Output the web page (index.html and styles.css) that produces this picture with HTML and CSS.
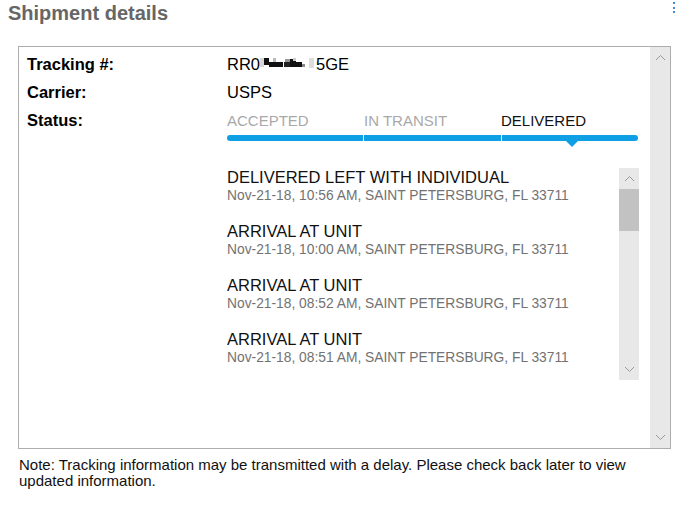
FILE: index.html
```html
<!DOCTYPE html>
<html>
<head>
<meta charset="utf-8">
<link rel="stylesheet" href="styles.css">
</head>
<body>
<div class="header">
  <h1 class="title">Shipment details</h1>
  <span class="edge-mark"></span>
</div>
<div class="panel">
  <div class="panel-content">
    <div class="row">
      <div class="label">Tracking #:</div>
      <div class="value">RR0<svg class="redact" width="56" height="16" viewBox="0 0 56 16"><rect x="0" y="3" width="4" height="9" fill="#d8d8d8"/><rect x="4" y="3" width="5" height="7" fill="#111"/><rect x="9" y="7" width="14" height="5" fill="#111"/><rect x="13" y="3" width="3" height="4" fill="#bbb"/><rect x="25" y="4" width="5" height="3" fill="#999"/><rect x="24" y="7" width="6" height="5" fill="#222"/><rect x="30" y="4" width="6" height="8" fill="#111"/><rect x="33" y="3" width="3" height="3" fill="#ccc"/><rect x="36" y="7" width="6" height="5" fill="#111"/><rect x="42" y="9" width="3" height="3" fill="#888"/><rect x="49" y="3" width="5" height="10" fill="#ddd"/></svg>5GE</div>
    </div>
    <div class="row">
      <div class="label">Carrier:</div>
      <div class="value">USPS</div>
    </div>
    <div class="row status-row">
      <div class="label">Status:</div>
      <div class="status">
        <div class="steps">
          <span class="step done">ACCEPTED</span>
          <span class="step done">IN TRANSIT</span>
          <span class="step current">DELIVERED</span>
        </div>
        <div class="bar">
          <span class="seg"></span>
          <span class="seg"></span>
          <span class="seg last"><span class="pointer"></span></span>
        </div>
      </div>
    </div>
    <div class="events-wrap">
      <div class="events">
        <div class="event">
          <div class="ev-title">DELIVERED LEFT WITH INDIVIDUAL</div>
          <div class="ev-sub">Nov-21-18, 10:56 AM, SAINT PETERSBURG, FL 33711</div>
        </div>
        <div class="event">
          <div class="ev-title">ARRIVAL AT UNIT</div>
          <div class="ev-sub">Nov-21-18, 10:00 AM, SAINT PETERSBURG, FL 33711</div>
        </div>
        <div class="event">
          <div class="ev-title">ARRIVAL AT UNIT</div>
          <div class="ev-sub">Nov-21-18, 08:52 AM, SAINT PETERSBURG, FL 33711</div>
        </div>
        <div class="event">
          <div class="ev-title">ARRIVAL AT UNIT</div>
          <div class="ev-sub">Nov-21-18, 08:51 AM, SAINT PETERSBURG, FL 33711</div>
        </div>
      </div>
      <div class="vscroll inner">
        <svg class="chev" width="11" height="7" viewBox="0 0 11 7"><path d="M1 6 L5.5 1.5 L10 6" fill="none" stroke="#9a9a9a" stroke-width="1"/></svg>
        <div class="thumb"></div>
        <div class="track"></div>
        <svg class="chev" width="11" height="7" viewBox="0 0 11 7"><path d="M1 1 L5.5 5.5 L10 1" fill="none" stroke="#9a9a9a" stroke-width="1"/></svg>
      </div>
    </div>
  </div>
  <div class="vscroll outer">
    <svg class="chev" width="11" height="7" viewBox="0 0 11 7"><path d="M1 6 L5.5 1.5 L10 6" fill="none" stroke="#9a9a9a" stroke-width="1"/></svg>
    <div class="track"></div>
    <svg class="chev" width="11" height="7" viewBox="0 0 11 7"><path d="M1 1 L5.5 5.5 L10 1" fill="none" stroke="#9a9a9a" stroke-width="1"/></svg>
  </div>
</div>
<p class="note">Note: Tracking information may be transmitted with a delay. Please check back later to view updated information.</p>
</body>
</html>
```
FILE: styles.css
```css
html, body {
  margin: 0;
  padding: 0;
  background: #fff;
}
body {
  font-family: "Liberation Sans", Arial, sans-serif;
  color: #000;
  width: 679px;
  height: 513px;
  overflow: hidden;
}
.header {
  display: flex;
  justify-content: space-between;
  align-items: flex-start;
  height: 46px;
}
.title {
  margin: 0;
  padding: 1px 0 0 8px;
  font-size: 20px;
  font-weight: bold;
  color: #666;
  line-height: 24px;
}
.edge-mark {
  width: 2px;
  height: 11px;
  margin: 2px 2px 0 0;
  border-left: 2px dotted #3d8fd6;
}
.panel {
  margin-left: 18px;
  width: 651px;
  height: 401px;
  border: 1px solid #adadad;
  display: flex;
}
.panel-content {
  flex: 1;
  padding: 8px 0 0 8px;
}
.row {
  display: flex;
  height: 28px;
  align-items: flex-start;
}
.status-row {
  height: auto;
}
.label {
  width: 200px;
  font-size: 16.5px;
  font-weight: bold;
  line-height: 19px;
}
.value {
  font-size: 16.5px;
  line-height: 19px;
  display: flex;
  align-items: flex-start;
}
.redact {
  display: block;
}
.status {
  width: 411px;
}
.steps {
  display: flex;
  height: 19px;
}
.step {
  width: 137px;
  font-size: 15px;
  line-height: 19px;
}
.step.done {
  color: #a9a9a9;
}
.step.current {
  color: #111;
}
.bar {
  display: flex;
  gap: 1px;
  margin-top: 5px;
  height: 6px;
}
.seg {
  flex: 1;
  background: #0e9fe4;
  position: relative;
}
.seg:first-child {
  border-radius: 3px 0 0 3px;
}
.seg.last {
  border-radius: 0 3px 3px 0;
}
.pointer {
  position: absolute;
  left: 64px;
  top: 6px;
  width: 0;
  height: 0;
  border-left: 6px solid transparent;
  border-right: 6px solid transparent;
  border-top: 6px solid #0e9fe4;
}
.events-wrap {
  margin-left: 200px;
  margin-top: 27px;
  width: 412px;
  height: 212px;
  display: flex;
}
.events {
  flex: 1;
  overflow: hidden;
}
.event {
  height: 54px;
}
.ev-title {
  font-size: 16.5px;
  line-height: 19px;
  color: #111;
}
.ev-sub {
  margin-top: 1px;
  font-size: 13.8px;
  line-height: 16px;
  color: #727272;
}
.vscroll {
  width: 20px;
  background: #e8e8e8;
  display: flex;
  flex-direction: column;
  align-items: center;
}
.vscroll .chev {
  display: block;
  margin: 7px 0;
}
.vscroll .track {
  flex: 1;
}
.vscroll .thumb {
  align-self: stretch;
  height: 42px;
  background: #c2c2c2;
}
.note {
  margin: 8px 0 0 19px;
  width: 640px;
  font-size: 15px;
  line-height: 16px;
  color: #111;
}
```
